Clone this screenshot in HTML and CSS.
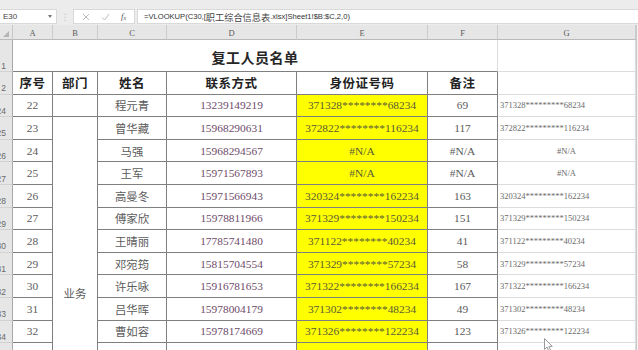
FILE: index.html
```html
<!DOCTYPE html>
<html lang="zh">
<head>
<meta charset="utf-8">
<title>复工人员名单</title>
<link rel="stylesheet" href="styles.css">
</head>
<body>
<div class="toolbar">
  <div class="namebox"><span>E30</span><span class="caret"></span></div>
  <div class="sep">⋮</div>
  <div class="fxbox">
    <svg class="ic" width="8" height="8" viewBox="0 0 8 8"><path d="M1 1L7 7M7 1L1 7" stroke="#bdbdbd" stroke-width="1"/></svg>
    <svg class="ic" width="9" height="8" viewBox="0 0 9 8"><path d="M1 4.5L3.5 7L8 1" stroke="#bdbdbd" stroke-width="1" fill="none"/></svg>
    <span class="fx">f<sub>x</sub></span>
  </div>
  <div class="formula">=VLOOKUP(C30,[<span class="cjk">职工综合信息表</span>.xlsx]Sheet1!$B:$C,2,0)</div>
</div>
<div class="sheet">
  <div class="grid">
    <div class="corner"><svg width="6" height="6" viewBox="0 0 6 6"><path d="M6 0V6H0Z" fill="#b5b5b5"/></svg></div>
    <div class="ch">A</div><div class="ch">B</div><div class="ch">C</div><div class="ch">D</div><div class="ch">E</div><div class="ch">F</div><div class="ch">G</div>

    <div class="rh"><span>1</span></div>
    <div class="title">复工人员名单</div>
    <div class="g"></div>

    <div class="rh"><span>2</span></div>
    <div class="c hd">序号</div><div class="c hd">部门</div><div class="c hd">姓名</div><div class="c hd">联系方式</div><div class="c hd">身份证号码</div><div class="c hd">备注</div>
    <div class="g"></div>

    <div class="merged">业务</div>

    <div class="rh"><span>24</span></div>
    <div class="c">22</div><div class="c"></div><div class="c">程元青</div><div class="c p">13239149219</div><div class="c id">371328********68234</div><div class="c">69</div>
    <div class="g">371328*********68234</div>

    <div class="rh"><span>25</span></div>
    <div class="c">23</div><div class="c">曾华藏</div><div class="c p">15968290631</div><div class="c id">372822********116234</div><div class="c">117</div>
    <div class="g">372822*********116234</div>

    <div class="rh"><span>26</span></div>
    <div class="c">24</div><div class="c">马强</div><div class="c p">15968294567</div><div class="c id">#N/A</div><div class="c">#N/A</div>
    <div class="g na">#N/A</div>

    <div class="rh"><span>27</span></div>
    <div class="c">25</div><div class="c">王军</div><div class="c p">15971567893</div><div class="c id">#N/A</div><div class="c">#N/A</div>
    <div class="g na">#N/A</div>

    <div class="rh"><span>28</span></div>
    <div class="c">26</div><div class="c">高曼冬</div><div class="c p">15971566943</div><div class="c id">320324********162234</div><div class="c">163</div>
    <div class="g">320324*********162234</div>

    <div class="rh"><span>29</span></div>
    <div class="c">27</div><div class="c">傅家欣</div><div class="c p">15978811966</div><div class="c id">371329********150234</div><div class="c">151</div>
    <div class="g">371329*********150234</div>

    <div class="rh"><span>30</span></div>
    <div class="c">28</div><div class="c">王晴丽</div><div class="c p">17785741480</div><div class="c id">371122********40234</div><div class="c">41</div>
    <div class="g">371122*********40234</div>

    <div class="rh"><span>31</span></div>
    <div class="c">29</div><div class="c">邓宛筠</div><div class="c p">15815704554</div><div class="c id">371329********57234</div><div class="c">58</div>
    <div class="g">371329*********57234</div>

    <div class="rh"><span>32</span></div>
    <div class="c">30</div><div class="c">许乐咏</div><div class="c p">15916781653</div><div class="c id">371322********166234</div><div class="c">167</div>
    <div class="g">371322*********166234</div>

    <div class="rh"><span>33</span></div>
    <div class="c">31</div><div class="c">吕华晖</div><div class="c p">15978004179</div><div class="c id">371302********48234</div><div class="c">49</div>
    <div class="g">371302*********48234</div>

    <div class="rh"><span>34</span></div>
    <div class="c">32</div><div class="c">曹如容</div><div class="c p">15978174669</div><div class="c id">371326********122234</div><div class="c">123</div>
    <div class="g">371326*********122234</div>

    <div class="rh"><span>35</span></div>
    <div class="c"></div><div class="c"></div><div class="c p"></div><div class="c id"></div><div class="c"></div>
    <div class="g"></div>
  </div>
  <div class="edge"></div>
</div>
<svg class="cursor" width="10" height="14" viewBox="0 0 10 14"><path d="M0.5 0.5V11.5L3 9L5 13.5L6.8 12.7L4.9 8.4H8.3Z" fill="#fff" stroke="#9a9a9a" stroke-width="1"/></svg>
</body>
</html>
```
FILE: styles.css
```css
html, body {
  margin: 0;
  padding: 0;
}
body {
  width: 638px;
  height: 350px;
  overflow: hidden;
  background: #fff;
  position: relative;
  font-family: "Liberation Serif", "Noto Sans CJK SC", serif;
}

/* formula bar */
.toolbar {
  height: 25px;
  box-sizing: border-box;
  padding-top: 9px;
  padding-bottom: 1px;
  background: #ececec;
  display: flex;
  align-items: stretch;
}
.namebox {
  width: 57px;
  box-sizing: border-box;
  background: #fff;
  border: 1px solid #d9d9d9;
  border-left: none;
  display: flex;
  align-items: center;
  justify-content: space-between;
  padding: 0 4px 0 3px;
  font-family: "Liberation Sans", "Noto Sans CJK SC", sans-serif;
  font-size: 8px;
  color: #444;
}
.caret {
  width: 0;
  height: 0;
  border-left: 2.5px solid transparent;
  border-right: 2.5px solid transparent;
  border-top: 3px solid #777;
}
.sep {
  width: 16px;
  display: flex;
  align-items: center;
  justify-content: center;
  font-size: 9px;
  color: #c4c4c4;
  font-family: "DejaVu Sans", sans-serif;
}
.fxbox {
  width: 62px;
  box-sizing: border-box;
  background: #fff;
  border: 1px solid #d9d9d9;
  display: flex;
  align-items: center;
  padding-left: 8px;
  gap: 11px;
}
.fx {
  font-family: "Liberation Serif", serif;
  font-style: italic;
  font-size: 9px;
  color: #555;
  line-height: 1;
}
.fx sub {
  font-size: 6px;
  vertical-align: -1px;
}
.formula {
  flex: 1;
  margin-left: 2px;
  box-sizing: border-box;
  background: #fff;
  border: 1px solid #d9d9d9;
  border-right: none;
  display: flex;
  align-items: center;
  padding-left: 6px;
  font-family: "Liberation Sans", "Noto Sans CJK SC", sans-serif;
  font-size: 7.6px;
  color: #333;
  white-space: nowrap;
}
.formula .cjk {
  font-family: "Noto Sans CJK SC", sans-serif;
  font-size: 9.2px;
  color: #444;
}

/* sheet */
.sheet {
  display: flex;
}
.grid {
  width: 636px;
  display: grid;
  grid-template-columns: 13px 40px 45px 69px 130px 131px 70px 138px;
  grid-template-rows: 15px 32px 22.7px repeat(12, 22.6px);
}
.edge {
  flex: 1;
  background: #f4f4f4;
  border-left: 1px solid #c9c9c9;
}
.corner {
  background: #e6e6e6;
  border-right: 1px solid #c9c9c9;
  border-bottom: 1px solid #b9b9b9;
  display: flex;
  align-items: flex-end;
  justify-content: flex-end;
  padding: 0 3px 2px 0;
}
.ch {
  background: #e6e6e6;
  border-right: 1px solid #cbcbcb;
  border-bottom: 1px solid #b9b9b9;
  display: flex;
  align-items: flex-end;
  justify-content: center;
  padding-bottom: 1px;
  font-size: 8.5px;
  color: #5a5a5a;
}
.rh {
  background: #e6e6e6;
  border-right: 1px solid #a9a9a9;
  border-bottom: 1px solid #d2d2d2;
  display: flex;
  align-items: flex-end;
  justify-content: flex-end;
  padding-right: 6px;
  overflow: hidden;
  font-family: "Liberation Sans", sans-serif;
  font-size: 8.5px;
  color: #6a6a6a;
  line-height: 1;
}
.rh span {
  flex: none;
  padding-bottom: 1px;
}
.title {
  grid-column: span 6;
  border-right: 1px solid #dcdcdc;
  border-bottom: 1px solid #7f7f7f;
  display: flex;
  align-items: center;
  justify-content: center;
  padding-top: 2px;
  font-family: "Noto Sans CJK SC", sans-serif;
  font-size: 14px;
  font-weight: 700;
  letter-spacing: 0.5px;
  color: #262626;
}
.c {
  border-right: 1px solid #7f7f7f;
  border-bottom: 1px solid #7f7f7f;
  display: flex;
  align-items: center;
  justify-content: center;
  white-space: nowrap;
  overflow: hidden;
  font-size: 11.4px;
  color: #5b5b5b;
}
.hd {
  font-family: "Noto Sans CJK SC", sans-serif;
  font-size: 12.5px;
  font-weight: 700;
  color: #222;
  letter-spacing: 0.5px;
}
.p {
  color: #6e4b69;
}
.id {
  background: #ffff00;
  color: #5a5a3a;
}
.merged {
  grid-column: 3;
  grid-row: 5 / 16;
  border-right: 1px solid #7f7f7f;
  display: flex;
  justify-content: center;
  align-items: flex-start;
  padding-top: 168px;
  font-size: 11.4px;
  color: #5b5b5b;
}
.g {
  border-right: 1px solid #dcdcdc;
  border-bottom: 1px solid #dcdcdc;
  display: flex;
  align-items: center;
  padding-left: 2px;
  white-space: nowrap;
  overflow: hidden;
  font-size: 8.5px;
  color: #6a6a6a;
}
.g.na {
  justify-content: center;
  padding-left: 0;
}
.cursor {
  position: absolute;
  left: 544px;
  top: 338px;
}
```
